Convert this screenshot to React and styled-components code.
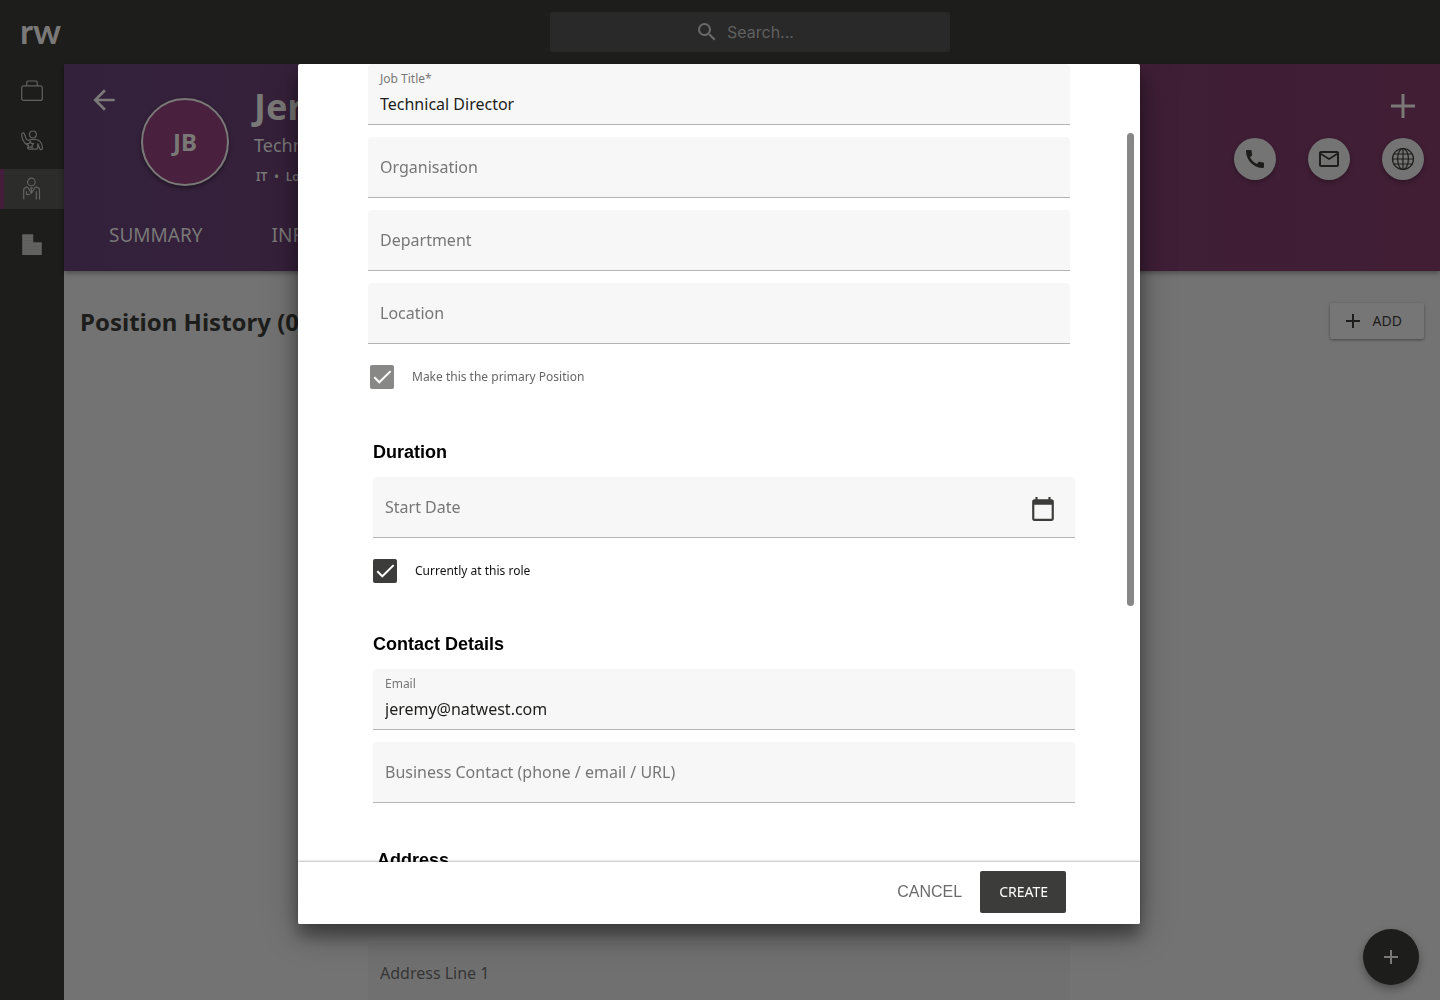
import React from "react";
import styled, { createGlobalStyle, css } from "styled-components";
import {
  MdArrowBack,
  MdCalendarToday,
  MdCall,
  MdMailOutline,
  MdSearch,
} from "react-icons/md";

const sans = `"Noto Sans", "Open Sans", sans-serif`;
const arial = `"Liberation Sans", Arial, sans-serif`;

const color = {
  ink: "#1d1d1b",
  page: "#737373",
  muted: "#7a7978",
  icon: "#626261",
};

const GlobalStyle = createGlobalStyle`
  *, *::before, *::after { box-sizing: border-box; }
  body {
    margin: 0;
    background: ${color.page};
    color: ${color.ink};
    font-family: ${sans};
    overflow: hidden;
  }
  button, input { font: inherit; color: inherit; }
  button { border: 0; padding: 0; background: none; cursor: pointer; }
  h1, h2, h3, p { margin: 0; }
  a { color: inherit; text-decoration: none; }
  svg { display: block; flex: none; }
`;

const Shell = styled.div`
  display: flex;
  flex-direction: column;
  min-height: 100vh;
`;

const TopBar = styled.header`
  display: flex;
  align-items: center;
  height: 64px;
  padding-left: 20px;
  background: ${color.ink};
`;

const Logo = styled.a`
  width: 40px;
  padding-bottom: 4px;
  font: 700 35px/40px Lato, sans-serif;
  color: ${color.muted};
`;

const SearchArea = styled.div`
  flex: 1;
  display: flex;
  justify-content: center;
`;

const SearchBox = styled.label`
  display: flex;
  align-items: center;
  justify-content: center;
  gap: 8px;
  width: 400px;
  height: 40px;
  border-radius: 2px;
  background: #292929;
  color: #6a6a6a;
`;

const SearchInput = styled.input`
  width: 78px;
  border: 0;
  padding: 0;
  background: transparent;
  font-family: Inter, sans-serif;
  font-size: 16px;
  line-height: 24px;
  outline: 0;
  &::placeholder { color: #606060; opacity: 1; }
`;

const Columns = styled.div`
  flex: 1;
  display: flex;
`;

const SideNav = styled.nav`
  display: flex;
  flex-direction: column;
  gap: 16px;
  width: 64px;
  padding-top: 7px;
  background: ${color.ink};
`;

const NavGroup = styled.div`
  display: flex;
  flex-direction: column;
  gap: 9px;
`;

const NavLink = styled.a`
  display: flex;
  align-items: center;
  justify-content: center;
  height: 40px;
  color: ${color.icon};
  ${({ $active }) =>
    $active &&
    css`
      background: #2c2c2b;
      box-shadow: inset 4px 0 0 #431d3a;
    `}
`;

const Main = styled.main`
  flex: 1;
  min-width: 0;
`;

const Profile = styled.section`
  display: flex;
  flex-direction: column;
  justify-content: space-between;
  height: 207px;
  padding: 20px 16px 18px 24px;
  background: linear-gradient(90deg, #33213b, #3c1f38 60%, #411e34);
  box-shadow: 0 2px 5px rgba(0, 0, 0, 0.35);
  color: ${color.muted};
`;

const ProfileRow = styled.div`
  display: flex;
  align-items: flex-start;
`;

const BackButton = styled.button`
  display: flex;
`;

const Avatar = styled.div`
  display: flex;
  align-items: center;
  justify-content: center;
  width: 88px;
  height: 88px;
  margin: 14px 25px 0 21px;
  padding-bottom: 2px;
  border: 2px solid ${color.muted};
  border-radius: 50%;
  background: #49213e;
  box-shadow: 0 2px 4px rgba(0, 0, 0, 0.4);
  font-size: 24px;
  font-weight: 700;
`;

const Identity = styled.div`
  flex: 1;
  min-width: 0;
`;

const PersonName = styled.h1`
  font-size: 36px;
  line-height: 46px;
`;

const Role = styled.p`
  font-size: 18px;
  line-height: 30px;
`;

const Facts = styled.p`
  display: flex;
  gap: 7px;
  padding: 9px 0 0 2px;
  font-size: 12px;
  line-height: 16px;
  font-weight: 600;
`;

const ProfileActions = styled.div`
  display: flex;
  flex-direction: column;
  align-items: flex-end;
  gap: 20px;
  padding-top: 10px;
`;

const PlusButton = styled.button`
  display: flex;
  margin-right: 9px;
`;

const ContactActions = styled.div`
  display: flex;
  gap: 32px;
`;

const RoundLink = styled.a`
  display: flex;
  align-items: center;
  justify-content: center;
  width: 42px;
  height: 42px;
  border-radius: 50%;
  background: #747474;
  box-shadow: 0 2px 5px rgba(0, 0, 0, 0.3);
  color: ${color.ink};
`;

const Tabs = styled.nav`
  display: flex;
  gap: 69px;
  padding-left: 21px;
  font-size: 19px;
  line-height: 36px;
`;

const History = styled.section`
  display: flex;
  align-items: flex-start;
  justify-content: space-between;
  padding: 32px 16px 0;
`;

const HistoryTitle = styled.h2`
  font-size: 24px;
  line-height: 38px;
`;

const AddButton = styled.button`
  display: flex;
  align-items: center;
  gap: 13px;
  height: 36px;
  padding: 0 22px 0 16px;
  border-radius: 2px;
  background: #767676;
  box-shadow: 0 1px 3px rgba(0, 0, 0, 0.4);
  font-size: 14px;
  line-height: 20px;
`;

const Fab = styled.button`
  position: fixed;
  right: 21px;
  bottom: 15px;
  display: flex;
  align-items: center;
  justify-content: center;
  width: 56px;
  height: 56px;
  border-radius: 50%;
  background: ${color.ink};
  box-shadow: 0 4px 8px rgba(0, 0, 0, 0.35);
  color: ${color.muted};
`;

const Overlay = styled.div`
  position: fixed;
  inset: 64px 0 0;
  display: flex;
  flex-direction: column;
  align-items: center;
  padding-right: 2px;
  overflow: hidden;
  pointer-events: none;
`;

const Dialog = styled.form`
  position: relative;
  z-index: 1;
  flex: none;
  display: flex;
  flex-direction: column;
  width: min(842px, 100%);
  height: calc(100vh - 140px);
  border-radius: 2px;
  background: #fff;
  box-shadow: 0 12px 16px rgba(0, 0, 0, 0.35), 0 8px 36px rgba(0, 0, 0, 0.3);
  pointer-events: auto;
`;

const DialogBody = styled.div`
  flex: 1;
  min-height: 0;
  overflow-y: auto;
  scrollbar-width: none;
`;

const ScrollThumb = styled.div`
  position: absolute;
  top: 69px;
  right: 6px;
  width: 7px;
  height: 55%;
  border-radius: 4px;
  background: #868786;
`;

const Group = styled.section`
  display: flex;
  flex-direction: column;
  gap: 12px;
  padding: 0 ${({ $shift = 0 }) => 70 - $shift}px 0 ${({ $shift = 0 }) => 70 + $shift}px;
  margin-top: ${({ $top = 0 }) => $top}px;
`;

const GroupTitle = styled.h3`
  margin-bottom: 1px;
  font: 700 18px/24px ${arial};
  color: #000;
`;

const FieldBox = styled.div`
  display: flex;
  flex-direction: column;
  justify-content: center;
  height: 61px;
  padding: 0 12px;
  border-bottom: 1px solid #b4b4b4;
  border-radius: 4px 4px 0 0;
  background: #f7f7f7;
  ${({ $icon }) =>
    $icon &&
    css`
      flex-direction: row;
      align-items: center;
      padding-right: 19px;
    `}
  ${({ $filled }) =>
    $filled &&
    css`
      gap: 4px;
      padding-bottom: 2px;
    `}
  ${({ $dimmed }) =>
    $dimmed &&
    css`
      flex: none;
      width: min(702px, 100%);
      margin-top: 19px;
      background: #707070;
      border-color: #555;
      input::placeholder { color: #363636; }
    `}
`;

const FieldLabel = styled.label`
  font-size: 12px;
  line-height: 18px;
  color: #777;
`;

const FieldInput = styled.input`
  flex: ${({ $grow }) => ($grow ? 1 : "none")};
  min-width: 0;
  border: 0;
  padding: 0;
  background: transparent;
  font-size: 16px;
  line-height: 24px;
  height: 24px;
  color: ${color.ink};
  outline: 0;
  &::placeholder { color: #777; opacity: 1; }
`;

const DateButton = styled.button`
  display: flex;
  color: #3c3c3b;
  padding-top: 4px;
`;

const CheckRow = styled.label`
  display: flex;
  align-items: center;
  gap: 18px;
  margin-top: 9px;
  padding-left: ${({ $inset = 0 }) => $inset}px;
  font-size: 12px;
  line-height: 24px;
  color: ${({ $disabled }) => ($disabled ? "#666" : "#111")};
`;

const Tick = styled.span`
  display: grid;
  width: 24px;
  height: 24px;
  color: #fff;
  > * { grid-area: 1 / 1; }
  > svg { pointer-events: none; }
`;

const TickInput = styled.input`
  appearance: none;
  width: 24px;
  height: 24px;
  margin: 0;
  border-radius: 2px;
  background: #3c3c3b;
  &:disabled { background: #888887; }
`;

const DialogFooter = styled.footer`
  position: relative;
  display: flex;
  align-items: center;
  justify-content: flex-end;
  gap: 18px;
  height: 62px;
  padding: 0 74px 2px 16px;
  border-radius: 0 0 2px 2px;
  background: #fff;
  box-shadow: 0 -1px 2px rgba(0, 0, 0, 0.25);
`;

const CancelButton = styled.button`
  font: 400 16px/22px ${arial};
  color: #6b6b6b;
`;

const CreateButton = styled.button`
  height: 42px;
  padding: 0 18px 2px 19px;
  border-radius: 2px;
  background: #3c3c3b;
  color: #fff;
  font-size: 14px;
`;

const Plus = ({ size, weight }) => (
  <svg width={size} height={size} viewBox={`0 0 ${size} ${size}`} stroke="currentColor" strokeWidth={weight}>
    <path d={`M${size / 2} 0V${size}M0 ${size / 2}H${size}`} />
  </svg>
);

const LineIcon = ({ children }) => (
  <svg width="24" height="24" viewBox="0 0 24 24" fill="none" stroke="currentColor" strokeWidth="1.2" strokeLinecap="round" strokeLinejoin="round">
    {children}
  </svg>
);

const BriefcaseIcon = () => (
  <LineIcon>
    <rect x="1.7" y="6.8" width="20.6" height="14.6" rx="2" />
    <path d="M6.8 6.6V3.2q0-1.2 1.2-1.2h8q1.2 0 1.2 1.2v3.4" />
  </LineIcon>
);

const CandidateIcon = () => (
  <LineIcon>
    <circle cx="12.9" cy="6.4" r="3.4" />
    <path d="M7.4 17.1C4 15 2 11 1.700 6.800 1.600 4.800 3.800 4.200 4.400 5.900L6.300 11.300C8 13 9.500 11.700 11.400 11.500H16c4 .3 6 4 6.500 8.400.1 2-2.200 2.300-2.700.8L17.800 15.700V19q0 2.200-1.800 2.200H9.300q-1.700 0-1.700-1.600" />
    <path d="m10.300 13.200 1 2.200 2.400.3-1.700 1.700.4 2.400-2.100-1.100-2.200 1.100.4-2.400-1.700-1.700 2.400-.3z" />
  </LineIcon>
);

const ContactIcon = () => (
  <LineIcon>
    <circle cx="11.400" cy="5" r="3.800" />
    <path d="M3.700 22V13.500q0-3 2.800-3.300h1.300L11.400 16.500 15 10.200h1.500q3 .3 3 3.300V22M16.300 14.500V22M6.500 14.500v3l3-.2M11.400 11.500v4M10.500 11.200h1.800" />
  </LineIcon>
);

const BuildingIcon = () => (
  <svg width="24" height="24" viewBox="0 0 24 24">
    <path d="M2.200 1.200h11v8h8.600v12.900H2.200z" fill="currentColor" />
    <path d="M4 4.500h7.500M4 7.500h7.500M4 10.500h7.500M4 13.500h16M4 16.500h16M4 19.500h2.500M9.500 19.500h2M14 19.500h2M19 19.500h1" stroke="#5a5a59" strokeWidth=".6" />
  </svg>
);

const GlobeIcon = () => (
  <LineIcon>
    <circle cx="12" cy="12" r="10.500" />
    <ellipse cx="12" cy="12" rx="5.400" ry="10.500" />
    <path d="M12 1.500v21M1.500 12h21M3 7h18M3 17h18" />
  </LineIcon>
);

const CheckIcon = () => (
  <svg width="24" height="24" viewBox="0 0 24 24" fill="none" stroke="currentColor" strokeWidth="2">
    <path d="m4.300 12.300 5 5L20.600 6.100" />
  </svg>
);

function TextField({ id, label, value, type = "text", icon, dimmed }) {
  const filled = Boolean(value);
  return (
    <FieldBox $filled={filled} $icon={Boolean(icon)} $dimmed={dimmed}>
      {filled && <FieldLabel htmlFor={id}>{label}</FieldLabel>}
      <FieldInput
        id={id}
        type={type}
        defaultValue={value}
        placeholder={filled ? undefined : label}
        aria-label={filled ? undefined : label}
        $grow={Boolean(icon)}
      />
      {icon}
    </FieldBox>
  );
}

function CheckField({ children, disabled, inset }) {
  return (
    <CheckRow $disabled={disabled} $inset={inset}>
      <Tick>
        <TickInput type="checkbox" defaultChecked disabled={disabled} />
        <CheckIcon />
      </Tick>
      {children}
    </CheckRow>
  );
}

export default function App() {
  return (
    <>
      <GlobalStyle />
      <Shell>
        <TopBar>
          <Logo href="#">rw</Logo>
          <SearchArea>
            <SearchBox>
              <MdSearch size={24} />
              <SearchInput type="text" placeholder="Search..." aria-label="Search" />
            </SearchBox>
          </SearchArea>
        </TopBar>
        <Columns>
          <SideNav>
            <NavGroup>
              <NavLink href="#" aria-label="Jobs"><BriefcaseIcon /></NavLink>
              <NavLink href="#" aria-label="Candidates"><CandidateIcon /></NavLink>
              <NavLink href="#" aria-label="Contacts" $active><ContactIcon /></NavLink>
            </NavGroup>
            <NavGroup>
              <NavLink href="#" aria-label="Organisations"><BuildingIcon /></NavLink>
            </NavGroup>
          </SideNav>
          <Main>
            <Profile>
              <ProfileRow>
                <BackButton type="button" aria-label="Back"><MdArrowBack size={32} /></BackButton>
                <Avatar>JB</Avatar>
                <Identity>
                  <PersonName>Jeremy</PersonName>
                  <Role>Technical Director</Role>
                  <Facts>
                    <span>IT</span>
                    <span>•</span>
                    <span>London</span>
                  </Facts>
                </Identity>
                <ProfileActions>
                  <PlusButton type="button" aria-label="Add"><Plus size={24} weight={3} /></PlusButton>
                  <ContactActions>
                    <RoundLink href="#" aria-label="Call"><MdCall size={24} /></RoundLink>
                    <RoundLink href="#" aria-label="Email"><MdMailOutline size={24} /></RoundLink>
                    <RoundLink href="#" aria-label="Website"><GlobeIcon /></RoundLink>
                  </ContactActions>
                </ProfileActions>
              </ProfileRow>
              <Tabs>
                <a href="#">SUMMARY</a>
                <a href="#">INFO</a>
              </Tabs>
            </Profile>
            <History>
              <HistoryTitle>Position History (0)</HistoryTitle>
              <AddButton type="button"><Plus size={14} weight={2} />ADD</AddButton>
            </History>
          </Main>
        </Columns>
      </Shell>
      <Overlay>
        <Dialog>
          <DialogBody>
            <Group>
              <TextField id="job-title" label="Job Title*" value="Technical Director" />
              <TextField id="organisation" label="Organisation" />
              <TextField id="department" label="Department" />
              <TextField id="location" label="Location" />
              <CheckField disabled inset={2}>Make this the primary Position</CheckField>
            </Group>
            <Group $shift={5} $top={51}>
              <GroupTitle>Duration</GroupTitle>
              <TextField
                id="start-date"
                label="Start Date"
                icon={<DateButton type="button" aria-label="Pick a date"><MdCalendarToday size={26} /></DateButton>}
              />
              <CheckField>Currently at this role</CheckField>
            </Group>
            <Group $shift={5} $top={49}>
              <GroupTitle>Contact Details</GroupTitle>
              <TextField id="email" label="Email" type="email" value="jeremy@natwest.com" />
              <TextField id="business-contact" label="Business Contact (phone / email / URL)" />
            </Group>
            <Group $shift={9} $top={45}>
              <GroupTitle>Address</GroupTitle>
            </Group>
          </DialogBody>
          <ScrollThumb />
          <DialogFooter>
            <CancelButton type="button">CANCEL</CancelButton>
            <CreateButton type="button">CREATE</CreateButton>
          </DialogFooter>
        </Dialog>
        <TextField id="address-line-1" label="Address Line 1" dimmed />
      </Overlay>
      <Fab type="button" aria-label="New"><Plus size={14} weight={2} /></Fab>
    </>
  );
}
